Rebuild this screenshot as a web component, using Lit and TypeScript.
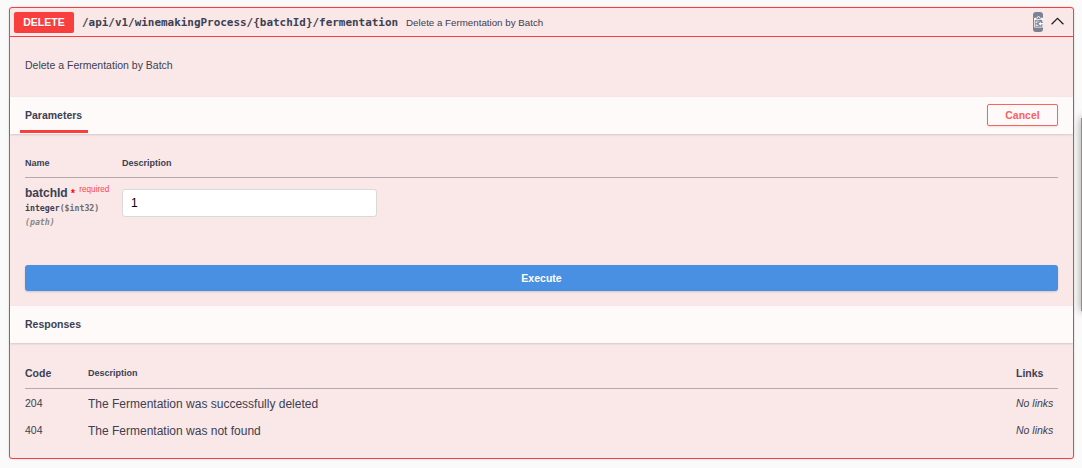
import { LitElement, html, css } from "lit";
import { customElement, property } from "lit/decorators.js";

@customElement("app-root")
export class AppRoot extends LitElement {
  @property({ attribute: false }) responses = [
    { code: "204", text: "The Fermentation was successfully deleted" },
    { code: "404", text: "The Fermentation was not found" },
  ];

  static styles = css`
    * { box-sizing: border-box; }
    :host {
      display: block;
      position: relative;
      height: 468px;
      overflow: hidden;
      padding: 7px 8px 0 9px;
      background: #fafafa;
      color: #3b4151;
      font-family: "Liberation Sans", Arial, sans-serif;
      font-size: 10.5px;
    }
    .block {
      height: 452px;
      border: 1px solid #f93e3e;
      border-radius: 3px;
      background: #fae7e7;
      box-shadow: 0 0 2px rgba(0, 0, 0, 0.19);
    }
    .summary {
      display: flex;
      align-items: center;
      height: 29px;
      padding: 0 8px 0 4px;
      border-bottom: 1px solid #f93e3e;
    }
    .method {
      width: 60px;
      height: 21px;
      border-radius: 2px;
      background: #f93e3e;
      color: #fff;
      font-weight: 700;
      line-height: 21px;
      text-align: center;
      text-shadow: 0 1px 0 rgba(0, 0, 0, 0.1);
    }
    .path {
      margin-left: 8px;
      padding-top: 2px;
      font: 700 10.94px/16px "DejaVu Sans Mono", monospace;
      white-space: nowrap;
    }
    .brief { margin-left: 8px; font-size: 9.75px; flex: 1; }
    .copy { width: 10px; height: 20px; margin-right: 8px; border-radius: 3px; background: #7d8293; overflow: hidden; }
    .copy svg, .arrow { display: block; }
    .intro { height: 60px; padding: 21px 15px 0; line-height: 15px; }
    .bar {
      display: flex;
      align-items: center;
      justify-content: space-between;
      height: 37px;
      padding: 0 15px 1px;
      background: #fefaf9;
      box-shadow: 0 1px 2px rgba(0, 0, 0, 0.14);
      font-weight: 700;
    }
    .tab {
      align-self: stretch;
      width: 68px;
      height: 36px;
      margin-left: -5px;
      padding-left: 5px;
      border-bottom: 3px solid #f93e3e;
      line-height: 37px;
    }
    .cancel {
      width: 71px;
      height: 22px;
      border: 1px solid #ff6060;
      border-radius: 2px;
      background: transparent;
      box-shadow: 0 1px 2px rgba(0, 0, 0, 0.1);
      color: #ff6060;
      font: inherit;
      padding: 0;
    }
    .params { height: 172px; padding: 15px 15px 0; }
    .head {
      display: grid;
      align-items: center;
      height: 29px;
      border-bottom: 1px solid #b6a8ad;
      font-size: 9px;
      font-weight: 700;
    }
    .params .head, .row { grid-template-columns: 97px 1fr; }
    .row { display: grid; height: 87px; }
    .name { height: 23px; padding-top: 7px; font-size: 12px; font-weight: 700; line-height: 16px; white-space: nowrap; }
    .star { color: #f00; font-size: 10px; line-height: 1; }
    .req { color: #ff4747; font-size: 8.2px; font-weight: 400; vertical-align: 5px; line-height: 1; margin-left: 1px; }
    .type { font: 700 8.22px/14px "DejaVu Sans Mono", monospace; }
    .fmt { color: #6b6b6b; }
    .in { font: italic 700 8.22px/14px "DejaVu Sans Mono", monospace; color: #888; }
    input {
      width: 255px;
      height: 28px;
      margin-top: 11px;
      padding: 0 8px;
      border: 1px solid #d9d9d9;
      border-radius: 3px;
      background: #fff;
      color: #000;
      font: 12px "Liberation Sans", Arial, sans-serif;
      outline: 0;
    }
    .execute {
      width: 100%;
      height: 26px;
      border: 0;
      border-radius: 3px;
      background: #4990e2;
      box-shadow: 0 1px 2px rgba(0, 0, 0, 0.15);
      color: #fff;
      font: inherit;
      font-weight: 700;
      padding: 0;
    }
    .responses { padding: 16px 15px 0; }
    .responses .head, .resp { display: grid; grid-template-columns: 63px 1fr 42px; }
    .responses .head { height: 30px; padding-bottom: 1px; }
    .big { font-size: 10.5px; }
    .resp { height: 27px; align-items: center; }
    .resp .text { font-size: 12px; padding-top: 2px; }
    .none { font-style: italic; white-space: nowrap; }
    .scroll {
      position: absolute;
      left: 1081px;
      top: 118px;
      width: 8px;
      height: 193px;
      background: #8f8f8f;
      box-shadow: 0 0 8px rgba(0, 0, 0, 0.4);
    }
  `;

  render() {
    return html`
      <section class="block">
        <header class="summary">
          <span class="method">DELETE</span>
          <span class="path">/api/v1/winemakingProcess/{batchId}/fermentation</span>
          <span class="brief">Delete a Fermentation by Batch</span>
          <span class="copy">
            <svg width="10" height="20" viewBox="0 0 10 20" fill="#fff">
              <path
                transform="translate(1 3.4) scale(.75)"
                fill-rule="evenodd"
                d="M2 13h4v1H2v-1zm5-6H2v1h5V7zm2 3V8l-3 3 3 3v-2h5v-2H9zM4.5 9H2v1h2.5V9zM2 12h2.5v-1H2v1zm9 1h1v2c-.02.28-.11.52-.3.7-.19.18-.42.28-.7.3H1c-.55 0-1-.45-1-1V4c0-.55.45-1 1-1h3c0-1.11.89-2 2-2 1.11 0 2 .89 2 2h3c.55 0 1 .45 1 1v5h-1V6H1v9h10v-2zM2 5h8c0-.55-.45-1-1-1H8c-.55 0-1-.45-1-1s-.45-1-1-1-1 .45-1 1-.45 1-1 1H3c-.55 0-1 .45-1 1z"
              />
            </svg>
          </span>
          <svg class="arrow" width="14" height="20" viewBox="0 0 14 20" fill="none" stroke="#222" stroke-width="1.3">
            <path d="M.6 12.2 6.5 6.3l5.9 5.9" />
          </svg>
        </header>
        <div class="intro">Delete a Fermentation by Batch</div>
        <div class="bar">
          <span class="tab">Parameters</span>
          <button class="cancel">Cancel</button>
        </div>
        <div class="params">
          <div class="head"><span>Name</span><span>Description</span></div>
          <div class="row">
            <div>
              <div class="name">batchId <span class="star">*</span> <span class="req">required</span></div>
              <div class="type">integer<span class="fmt">($int32)</span></div>
              <div class="in">(path)</div>
            </div>
            <div><input .value=${"1"} /></div>
          </div>
          <button class="execute">Execute</button>
        </div>
        <div class="bar">Responses</div>
        <div class="responses">
          <div class="head">
            <span class="big">Code</span><span>Description</span><span class="big">Links</span>
          </div>
          ${this.responses.map(
            (r) => html`<div class="resp">
              <span>${r.code}</span><span class="text">${r.text}</span><span class="none">No links</span>
            </div>`
          )}
        </div>
      </section>
      <div class="scroll"></div>
    `;
  }
}
